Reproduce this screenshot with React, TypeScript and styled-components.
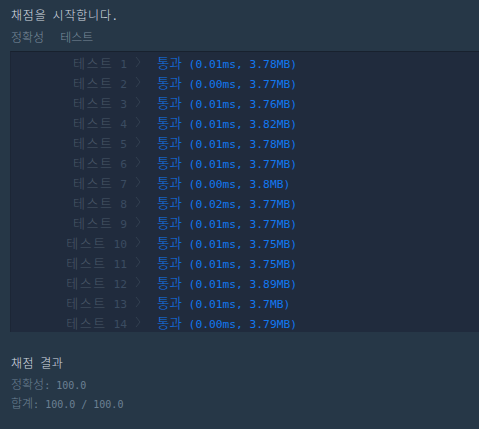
import React from "react";
import styled, { createGlobalStyle } from "styled-components";

const Global = createGlobalStyle`
  html, body { margin: 0; padding: 0; background: #263747; }
  body { font-family: "DejaVu Sans Mono", "Noto Sans CJK KR", monospace; overflow: hidden; }
`;

const Page = styled.div`
  width: 479px;
  height: 429px;
  padding-top: 4px;
  box-sizing: border-box;
  background: #263747;
`;

const Ko = styled.span<{ $size?: number; $ls?: number }>`
  font-family: "Noto Sans CJK KR", sans-serif;
  font-weight: 300;
  font-size: ${(p) => p.$size ?? 12}px;
  letter-spacing: ${(p) => p.$ls ?? 0}px;
`;

const Line = styled.div<{ $color: string; $h?: number }>`
  padding-left: 11px;
  height: ${(p) => p.$h ?? 22}px;
  line-height: ${(p) => p.$h ?? 22}px;
  font-size: 10px;
  color: ${(p) => p.$color};
  white-space: pre;
`;

const Tabs = styled.div`
  display: flex;
  gap: 16px;
`;

const Console = styled.div`
  margin: 3px 0 0 10px;
  background: #202b3d;
  border-top: 1px solid #18212e;
  border-left: 1px solid #1c2636;
  display: flex;
  flex-direction: column;
`;

const Row = styled.div`
  display: grid;
  grid-template-columns: 116px 30px auto;
  align-items: center;
  height: 20px;
  font-size: 11.25px;
  white-space: pre;
`;

const Label = styled.div`
  text-align: right;
  color: #4a5868;
`;

const Num = styled.span`
  color: #3b4c61;
`;

const Chevron = styled.div`
  display: flex;
  align-items: center;
  padding-left: 8px;
`;

const Result = styled.div`
  color: #1278f0;
`;

const Summary = styled.div`
  margin-top: 20px;
`;

const tests: [string, string][] = [
  ["0.01ms", "3.78MB"],
  ["0.00ms", "3.77MB"],
  ["0.01ms", "3.76MB"],
  ["0.01ms", "3.82MB"],
  ["0.01ms", "3.78MB"],
  ["0.01ms", "3.77MB"],
  ["0.00ms", "3.8MB"],
  ["0.02ms", "3.77MB"],
  ["0.01ms", "3.77MB"],
  ["0.01ms", "3.75MB"],
  ["0.01ms", "3.75MB"],
  ["0.01ms", "3.89MB"],
  ["0.01ms", "3.7MB"],
  ["0.00ms", "3.79MB"],
];

export default function App() {
  return (
    <Page>
      <Global />
      <Line $color="#d6dde3">
        <Ko $ls={0.8}>채점을</Ko> <Ko $ls={0.8}>시작합니다</Ko>.
      </Line>
      <Line $color="#7a8c9c">
        <Tabs>
          <Ko>정확성</Ko>
          <Ko>테스트</Ko>
        </Tabs>
      </Line>
      <Console>
        {tests.map(([t, m], i) => (
          <Row key={i}>
            <Label>
              <Ko $size={13} $ls={1.5}>테스트</Ko> <Num>{i + 1}</Num>
            </Label>
            <Chevron>
              <svg width="6" height="12" viewBox="0 0 6 12">
                <polyline points="1,1 5,6 1,11" fill="none" stroke="#323f50" strokeWidth="1" />
              </svg>
            </Chevron>
            <Result>
              <Ko $size={13.5}>통과</Ko> ({t}, {m})
            </Result>
          </Row>
        ))}
      </Console>
      <Summary>
        <Line $color="#d6dde3" $h={22}>
          <Ko $ls={0.5}>채점</Ko> <Ko $ls={0.5}>결과</Ko>
        </Line>
        <Line $color="#6c8093" $h={19}>
          <Ko>정확성</Ko>: 100.0
        </Line>
        <Line $color="#6c8093" $h={19}>
          <Ko>합계</Ko>: 100.0 / 100.0
        </Line>
      </Summary>
    </Page>
  );
}
